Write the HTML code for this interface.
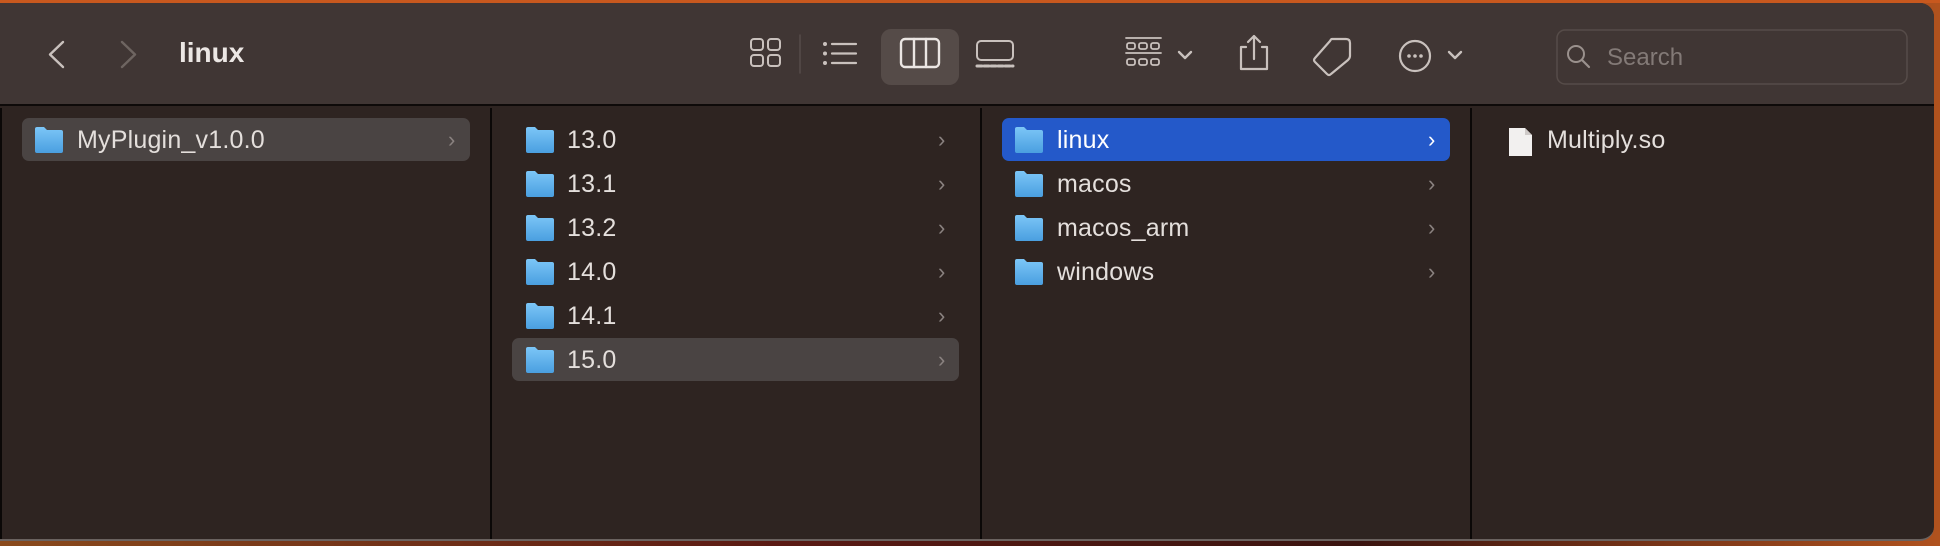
<!DOCTYPE html>
<html><head><meta charset="utf-8"><style>
*{margin:0;padding:0;box-sizing:border-box}
body{width:1940px;height:546px;overflow:hidden;background:linear-gradient(90deg,#8a4a1c,#5a1a14 40%,#3a1410 70%,#b0521e);font-family:"Liberation Sans",sans-serif;position:relative}
.win{position:absolute;left:0;top:3px;width:1934px;height:538px;background:#2e2421;border-radius:0 14px 14px 0;overflow:hidden;border-bottom:2px solid #6a625f}
.top{position:absolute;left:0;top:0;right:0;height:103px;background:#403634;border-bottom:2px solid #0e0a09}
.abs{position:absolute}
.div{position:absolute;top:105px;bottom:0;width:2px;background:#0b0807}
.row{position:absolute;height:43px;border-radius:7px;color:#e4dfdc;font-size:25px}
.row span{position:absolute;top:8px;letter-spacing:0.2px}
.sel{background:#4a4443}
.blue{background:#2459c9;color:#fff}
.chev{position:absolute;top:9px;color:#8a8280;font-size:22px;font-style:normal}
svg{position:absolute;overflow:visible}
</style></head><body>
<div style="position:absolute;left:0;top:0;width:1940px;height:3px;background:#c8581e"></div>
<div class="win">
<div class="top">
<svg style="left:0;top:-3px" width="1940" height="110" fill="none" stroke-linecap="round" stroke-linejoin="round">
 <path d="M63 42 L50 54.5 L63 67" stroke="#c9c1bd" stroke-width="2.4"/>
 <path d="M122 42 L135 54.5 L122 67" stroke="#6e6561" stroke-width="2.4"/>
 <g stroke="#c9c1bd" stroke-width="2">
  <rect x="751" y="39" width="12" height="11" rx="3"/><rect x="768" y="39" width="12" height="11" rx="3"/>
  <rect x="751" y="55" width="12" height="11" rx="3"/><rect x="768" y="55" width="12" height="11" rx="3"/>
 </g>
 <line x1="800" y1="35" x2="800" y2="73" stroke="#564c49" stroke-width="1.5"/>
 <g stroke="#c9c1bd" stroke-width="2.2"><path d="M832 44H856M832 53.5H856M832 63H856"/></g>
 <g fill="#c9c1bd"><circle cx="825" cy="44" r="2"/><circle cx="825" cy="53.5" r="2"/><circle cx="825" cy="63" r="2"/></g>
 <rect x="881" y="29" width="78" height="56" rx="10" fill="#554b48"/>
 <rect x="901" y="39" width="38" height="28" rx="4" stroke="#ebe6e3" stroke-width="2.4"/>
 <path d="M914 39V67M926 39V67" stroke="#ebe6e3" stroke-width="2.4"/>
 <rect x="977" y="41" width="36" height="19" rx="4" stroke="#c9c1bd" stroke-width="2"/>
 <path d="M977 66H1013" stroke="#c9c1bd" stroke-width="3" stroke-dasharray="5 2"/>
 <g stroke="#c9c1bd" stroke-width="1.8">
  <path d="M1126 38H1161M1126 53H1161"/>
  <rect x="1127" y="43" width="8" height="6" rx="2"/><rect x="1139" y="43" width="8" height="6" rx="2"/><rect x="1151" y="43" width="8" height="6" rx="2"/>
  <rect x="1127" y="59" width="8" height="6" rx="2"/><rect x="1139" y="59" width="8" height="6" rx="2"/><rect x="1151" y="59" width="8" height="6" rx="2"/>
 </g>
 <path d="M1179 52L1185 58L1191 52" stroke="#c9c1bd" stroke-width="2.4"/>
 <g stroke="#c9c1bd" stroke-width="2.2">
  <path d="M1246 47H1241V69H1267V47H1262M1254 36V59M1248 42L1254 36L1260 42"/>
  <path d="M1332 39H1346Q1350 39 1350 43V56Q1350 58 1348 60L1331 74Q1329 76 1327 74L1315 62Q1313 60 1315 58L1330 41Q1331 39 1332 39Z"/>
  <circle cx="1415" cy="56" r="15"/>
  <path d="M1449 52L1455 58L1461 52" stroke-width="2.4"/>
 </g>
 <g fill="#c9c1bd"><circle cx="1409" cy="56" r="1.8"/><circle cx="1415" cy="56" r="1.8"/><circle cx="1421" cy="56" r="1.8"/></g>
 <rect x="1557" y="30" width="350" height="54" rx="8" stroke="#564c49" stroke-width="1.5"/>
 <circle cx="1576" cy="54" r="8" stroke="#9a918d" stroke-width="2"/>
 <path d="M1582 60L1589 67" stroke="#9a918d" stroke-width="2.2"/>
</svg>
<div class="abs" style="left:179px;top:34px;font-size:28px;font-weight:bold;color:#ece7e4">linux</div>
<div class="abs" style="left:1607px;top:41px;font-size:24px;color:#837a77">Search</div>
</div>
<div class="div" style="left:0"></div>
<div class="div" style="left:490px"></div>
<div class="div" style="left:980px"></div>
<div class="div" style="left:1470px"></div>

<div class="row sel" style="left:22px;top:115px;width:448px"><span style="left:55px">MyPlugin_v1.0.0</span><i class="chev" style="left:426px">›</i></div>

<div class="row" style="left:512px;top:115px;width:447px"><span style="left:55px">13.0</span><i class="chev" style="left:426px">›</i></div>
<div class="row" style="left:512px;top:159px;width:447px"><span style="left:55px">13.1</span><i class="chev" style="left:426px">›</i></div>
<div class="row" style="left:512px;top:203px;width:447px"><span style="left:55px">13.2</span><i class="chev" style="left:426px">›</i></div>
<div class="row" style="left:512px;top:247px;width:447px"><span style="left:55px">14.0</span><i class="chev" style="left:426px">›</i></div>
<div class="row" style="left:512px;top:291px;width:447px"><span style="left:55px">14.1</span><i class="chev" style="left:426px">›</i></div>
<div class="row sel" style="left:512px;top:335px;width:447px"><span style="left:55px">15.0</span><i class="chev" style="left:426px">›</i></div>

<div class="row blue" style="left:1002px;top:115px;width:448px"><span style="left:55px">linux</span><i class="chev" style="left:426px;color:#fff">›</i></div>
<div class="row" style="left:1002px;top:159px;width:448px"><span style="left:55px">macos</span><i class="chev" style="left:426px">›</i></div>
<div class="row" style="left:1002px;top:203px;width:448px"><span style="left:55px">macos_arm</span><i class="chev" style="left:426px">›</i></div>
<div class="row" style="left:1002px;top:247px;width:448px"><span style="left:55px">windows</span><i class="chev" style="left:426px">›</i></div>

<div class="row" style="left:1500px;top:115px;width:400px"><span style="left:47px">Multiply.so</span></div>

<svg style="left:0;top:0" width="1940" height="540">
 <defs>
  <linearGradient id="f" x1="0" y1="0" x2="0" y2="1"><stop offset="0" stop-color="#7cc6f7"/><stop offset="1" stop-color="#4a9fe0"/></linearGradient>
  <path id="fo" fill="url(#f)" d="M0 2Q0 0 2 0H9L12 3H26Q28 3 28 5V24Q28 26 26 26H2Q0 26 0 24Z"/>
 </defs>
 <use href="#fo" x="35" y="124"/>
 <use href="#fo" x="526" y="124"/><use href="#fo" x="526" y="168"/><use href="#fo" x="526" y="212"/>
 <use href="#fo" x="526" y="256"/><use href="#fo" x="526" y="300"/><use href="#fo" x="526" y="344"/>
 <use href="#fo" x="1015" y="124"/><use href="#fo" x="1015" y="168"/><use href="#fo" x="1015" y="212"/><use href="#fo" x="1015" y="256"/>
 <path d="M1509 125H1525L1532 132V153H1509Z" fill="#f2f0ef"/>
 <path d="M1525 125V132H1532" fill="#cfcac8"/>
</svg>
</div>
</body></html>
